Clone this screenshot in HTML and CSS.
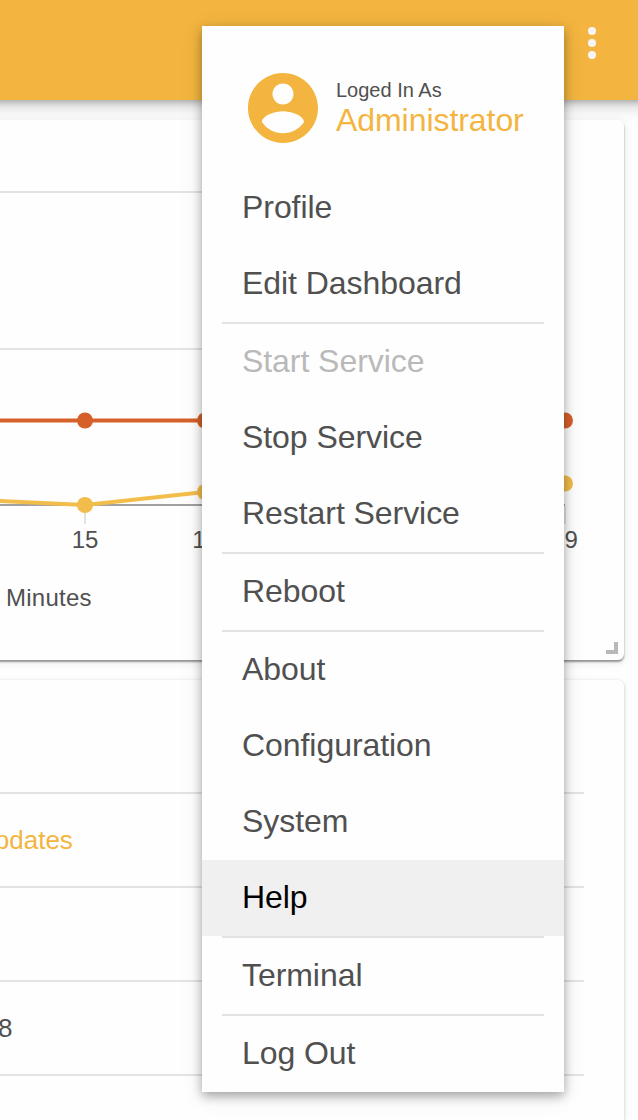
FILE: index.html
```html
<!DOCTYPE html>
<html lang="en">
<head>
<meta charset="utf-8">
<title>Dashboard</title>
<link rel="stylesheet" href="styles.css">
</head>
<body>
<header class="toolbar">
  <svg class="more-icon" viewBox="0 0 8 32"><circle cx="4" cy="4" r="4"/><circle cx="4" cy="16" r="4"/><circle cx="4" cy="28" r="4"/></svg>
</header>
<main class="board">
  <section class="card card-chart">
    <svg class="chart" width="624" height="540" viewBox="0 120 624 540">
      <g class="grid">
        <path d="M0 192H564.500M0 349H564.500M85 506V524M205 506V524M565 506V524"/>
      </g>
      <path class="axis" d="M0 505H565"/>
      <g class="series series-a">
        <path d="M-35 420.5H565"/>
        <circle cx="85" cy="420.500" r="8"/><circle cx="205" cy="420.500" r="8"/><circle cx="565" cy="420.500" r="8"/>
      </g>
      <g class="series series-b">
        <path d="M-35 499.500L85 505L205 492L565 483"/>
        <circle cx="85" cy="505" r="8"/><circle cx="205" cy="492" r="8"/><circle cx="565" cy="483.500" r="8"/>
      </g>
      <g class="labels">
        <text x="85" y="548">15</text><text x="205.500" y="548">16</text><text x="564.500" y="548">19</text>
        <text class="axis-title" x="6" y="606" textLength="85.500">Minutes</text>
      </g>
      <path class="resize" d="M606 652H616V642"/>
    </svg>
  </section>
  <section class="card card-info">
    <div class="card-title"></div>
    <div class="row"><a class="link">Updates</a></div>
    <div class="row"></div>
    <div class="row"><span class="count">8</span></div>
    <div class="row"></div>
  </section>
</main>
<nav class="menu">
  <div class="account">
    <svg class="avatar" viewBox="0 0 24 24"><path d="M12 2C6.48 2 2 6.48 2 12s4.48 10 10 10 10-4.480 10-10S17.520 2 12 2zm0 3c1.660 0 3 1.340 3 3s-1.340 3-3 3-3-1.340-3-3 1.340-3 3-3zm0 14.200c-2.500 0-4.710-1.280-6-3.220.030-1.990 4-3.080 6-3.080 1.990 0 5.970 1.090 6 3.080-1.290 1.940-3.500 3.220-6 3.220z"/></svg>
    <div class="account-text"><span class="caption">Loged In As</span><span class="user">Administrator</span></div>
  </div>
  <a class="item">Profile</a>
  <a class="item">Edit Dashboard</a>
  <hr class="divider">
  <a class="item disabled">Start Service</a>
  <a class="item">Stop Service</a>
  <a class="item">Restart Service</a>
  <hr class="divider">
  <a class="item">Reboot</a>
  <hr class="divider">
  <a class="item">About</a>
  <a class="item">Configuration</a>
  <a class="item">System</a>
  <a class="item active">Help</a>
  <hr class="divider">
  <a class="item">Terminal</a>
  <hr class="divider">
  <a class="item">Log Out</a>
</nav>
</body>
</html>
```
FILE: styles.css
```css
* { box-sizing: border-box; }
html { overflow: hidden; }
body {
  margin: 0;
  height: 1120px;
  overflow: hidden;
  position: relative;
  background: #fefefe;
  color: #505050;
  font-family: "Liberation Sans", Arial, sans-serif;
}
.toolbar {
  height: 100px;
  margin: 0 -30px;
  padding: 27px 72px 0 0;
  display: flex;
  justify-content: flex-end;
  align-items: flex-start;
  background: #f3b53f;
  box-shadow: 0 2px 18px rgba(0, 0, 0, .3), 0 2px 6px rgba(0, 0, 0, .18);
}
.more-icon { width: 8px; height: 32px; fill: #f5f5f5; }
.board {
  position: relative;
  display: flex;
  flex-direction: column;
  gap: 20px;
  margin-left: -20px;
  padding-top: 20px;
  width: 644px;
}
.card {
  padding-left: 20px;
  background: #fefefe;
  border-radius: 6px;
  box-shadow: 0 1px 3px rgba(0, 0, 0, .22), 0 2px 10px rgba(0, 0, 0, .06);
}
.card-chart { height: 540px; box-shadow: 0 2px 2px rgba(0, 0, 0, .38), 0 2px 10px rgba(0, 0, 0, .1); }
.card-info { height: 440px; padding-right: 40px; border-radius: 6px 6px 0 0; }
.chart { display: block; }
.grid path { stroke: #e3e3e3; stroke-width: 2; }
.axis { stroke: #a0a0a0; stroke-width: 2; }
.series path { fill: none; stroke-width: 4; }
.series-a { fill: #d5602a; }
.series-a path { stroke: #d5602a; }
.series-b { fill: #f2bd4b; }
.series-b path { stroke: #f2bd4b; }
.labels { fill: #505050; font-size: 24px; text-anchor: middle; }
.axis-title { text-anchor: start; }
.resize { fill: none; stroke: #b8b8b8; stroke-width: 4; }
.card-title { height: 114px; border-bottom: 2px solid #e3e3e3; }
.row {
  height: 94px;
  display: flex;
  align-items: center;
  border-bottom: 2px solid #e3e3e3;
  font-size: 26px;
}
.link { margin-left: -24px; color: #f3b53f; }
.count { margin-left: -2px; }
.menu {
  position: absolute;
  top: 26px;
  left: 202px;
  width: 362px;
  height: 1066px;
  background: #fefefe;
  box-shadow: 0 4px 10px rgba(0, 0, 0, .33), 0 4px 24px rgba(0, 0, 0, .08);
}
.account {
  height: 144px;
  padding: 40px 0 0 39px;
  display: flex;
  gap: 11px;
}
.avatar { width: 84px; height: 84px; fill: #f3b53f; flex: none; }
.account-text { display: flex; flex-direction: column; padding-top: 12px; }
.caption { font-size: 20px; line-height: 24px; }
.user { font-size: 32px; line-height: 36px; letter-spacing: -.06px; color: #f3b53f; }
.item {
  display: flex;
  align-items: center;
  height: 76px;
  padding: 0 40px 2px;
  font-size: 32px;
  letter-spacing: -.06px;
}
.disabled { color: #b9b9b9; }
.active { background: #f0f0f0; color: #000; }
.divider { height: 2px; margin: 0 20px; border: 0; background: #e3e3e3; }
```
